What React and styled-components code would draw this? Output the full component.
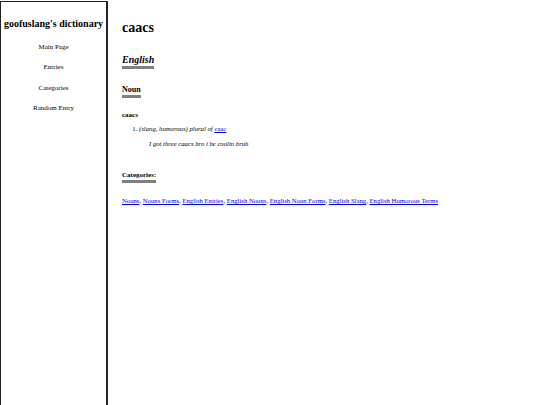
import styled, { createGlobalStyle } from "styled-components";

const Global = createGlobalStyle`
  html, body {
    margin: 0;
    padding: 0;
    background: #fff;
    font-family: "Liberation Serif", "Times New Roman", serif;
    color: #000;
  }
`;

const Page = styled.div`
  display: flex;
  min-height: 405px;
`;

const Sidebar = styled.nav`
  width: 105px;
  flex-shrink: 0;
  margin-top: 1px;
  border: 1px solid #222;
  border-bottom: none;
  border-right-width: 2px;
  display: flex;
  flex-direction: column;
  align-items: center;
`;

const SiteTitle = styled.h1`
  margin: 16px 0 14px;
  font-size: 10px;
  font-weight: bold;
  white-space: nowrap;
`;

const NavLink = styled.a`
  font-size: 7px;
  line-height: 8px;
  margin-bottom: 12.3px;
  color: #000;
  text-decoration: none;
`;

const Main = styled.main`
  padding: 20px 14px;
  display: flex;
  flex-direction: column;
  align-items: flex-start;
`;

const Title = styled.h1`
  margin: 0 0 18px;
  font-size: 14px;
`;

const Heading = styled.h2`
  display: inline-block;
  margin: 0;
  font-size: ${({ size }) => size}px;
  font-style: ${({ italic }) => (italic ? "italic" : "normal")};
  border-bottom: 3px solid #808080;
  padding-bottom: 1px;
  margin-bottom: ${({ after }) => after}px;
`;

const Word = styled.div`
  font-size: 7px;
  font-weight: bold;
  margin-bottom: 6px;
`;

const Senses = styled.ol`
  margin: 0 0 0 17px;
  padding: 0;
  font-size: 6.7px;
`;

const Sense = styled.li`
  line-height: 8px;
`;

const Example = styled.div`
  font-style: italic;
  margin: 7px 0 0 10px;
`;

const Link = styled.a`
  color: #0000ee;
  text-decoration: underline;
`;

const Spacer = styled.div`
  height: 23px;
`;

const CatList = styled.div`
  font-size: 6.7px;
`;

const cats = [
  "Nouns",
  "Nouns Forms",
  "English Entries",
  "English Nouns",
  "English Noun Forms",
  "English Slang",
  "English Humorous Terms",
];

export default function App() {
  return (
    <>
      <Global />
      <Page>
        <Sidebar>
          <SiteTitle>goofuslang's dictionary</SiteTitle>
          <NavLink href="#">Main Page</NavLink>
          <NavLink href="#">Entries</NavLink>
          <NavLink href="#">Categories</NavLink>
          <NavLink href="#">Random Entry</NavLink>
        </Sidebar>
        <Main>
          <Title>caacs</Title>
          <Heading size={10} italic after={16}>English</Heading>
          <Heading size={8} after={13}>Noun</Heading>
          <Word>caacs</Word>
          <Senses>
            <Sense>
              <i>(slang, humorous) plural of</i> <Link href="#">caac</Link>
              <Example>I got three caacs bro i be coolin bruh</Example>
            </Sense>
          </Senses>
          <Spacer />
          <Heading size={7} after={14}>Categories:</Heading>
          <CatList>
            {cats.map((c, i) => (
              <span key={c}>
                <Link href="#">{c}</Link>
                {i < cats.length - 1 ? ", " : ""}
              </span>
            ))}
          </CatList>
        </Main>
      </Page>
    </>
  );
}
